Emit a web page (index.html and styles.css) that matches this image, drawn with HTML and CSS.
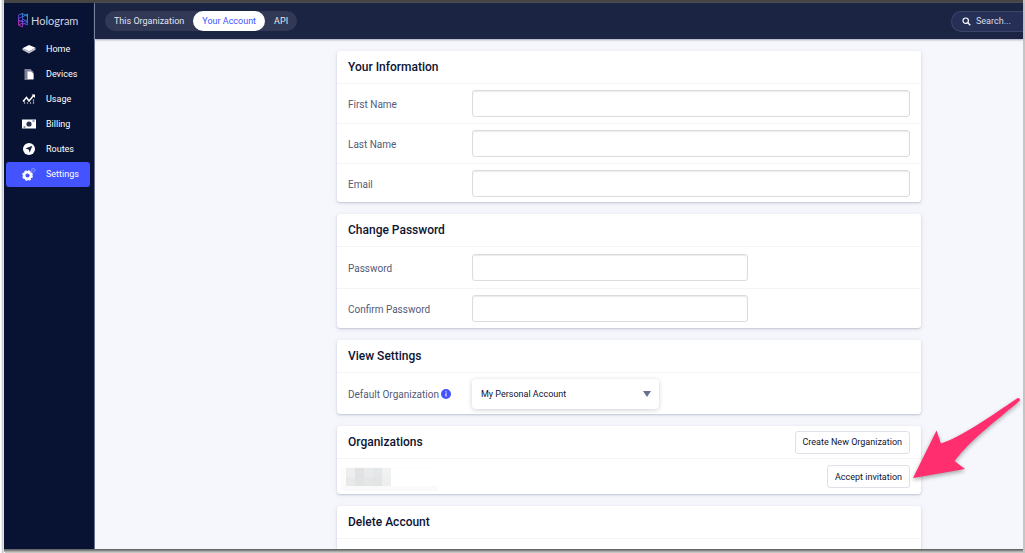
FILE: index.html
```html
<!DOCTYPE html>
<html lang="en">
<head>
<meta charset="utf-8">
<title>Hologram – Your Account</title>
<link rel="stylesheet" href="styles.css">
</head>
<body>
<div class="window">
  <aside class="sidebar">
    <a class="brand" href="#">
      <svg width="12" height="16" viewBox="0 0 12 16" aria-hidden="true">
        <defs><linearGradient id="holo" x1="0.9" y1="0" x2="0.1" y2="1"><stop offset="0" stop-color="#1fb4d8"/><stop offset="0.5" stop-color="#4b50dc"/><stop offset="1" stop-color="#e01fb0"/></linearGradient></defs>
        <path d="M1.500 3V13M5.500 1.500V15M10.500 2V13M1.500 3 5.500 1.500 10.500 4.500M5.500 5 10.500 2M1.500 6.500 5.500 4.500M1.500 8 5.500 10 10.500 7.500M5.500 7 10.500 10M1.500 13 5.500 15M5.500 12.500 10.500 10M5.500 11 10.500 13M1.500 10.500 5.500 8M1.500 13 5.500 11" fill="none" stroke="url(#holo)" stroke-width=".9"/>
      </svg>
      <span>Hologram</span>
    </a>
    <nav class="menu" aria-label="Main">
      <a class="item" href="#"><svg width="14" height="14" viewBox="0 0 14 14"><path d="M.5 6.200 7 3l6.500 2.800L7 9.500Z" fill="#fff"/><path d="M.5 6.200V8L7 11.500V9.500ZM7 9.500v2l6.500-3.700v-2Z" fill="#c3c6d2"/></svg>Home</a>
      <a class="item" href="#"><svg width="14" height="14" viewBox="0 0 14 14"><path d="M2.500 2h6l3 3v8h-9Z" fill="#7d8296"/><path d="M5.500 4.500h3.500l2.500 2.300V12h-6Z" fill="#fff"/></svg>Devices</a>
      <a class="item" href="#"><svg width="14" height="14" viewBox="0 0 14 14"><path d="M2.500 12v-3M5.500 12v-2M8.500 12v-2M11.500 12V7" stroke="#888da0" stroke-width="1.200"/><path d="M1 9.500 4.500 5.500 7 9l5-6" fill="none" stroke="#fff" stroke-width="1.500"/><path d="M9.500 2.500H13V6" fill="#fff"/></svg>Usage</a>
      <a class="item" href="#"><svg width="14" height="14" viewBox="0 0 14 14"><path d="M0 2.500h14v9H0Z" fill="#fff"/><circle cx="7" cy="7" r="2.600" fill="#2d3550"/><path d="M1.500 10h2M10.500 4h2" stroke="#2d3550"/></svg>Billing</a>
      <a class="item" href="#"><svg width="14" height="14" viewBox="0 0 14 14"><circle cx="7" cy="7" r="6" fill="#fff"/><path d="M10.300 3.700 7.800 10.500 6.600 7.600 3.500 6.500Z" fill="#18213f"/></svg>Routes</a>
      <a class="item item-active" href="#" aria-current="page"><svg width="14" height="14" viewBox="0 0 14 14"><circle cx="5.500" cy="8.500" r="3.300" fill="none" stroke="#fff" stroke-width="2.400"/><circle cx="5.500" cy="8.500" r="4.700" fill="none" stroke="#fff" stroke-width="1.400" stroke-dasharray="2.400 1.291"/><circle cx="11.300" cy="3.200" r="1.700" fill="none" stroke="#8d97ff" stroke-width="1.300" stroke-dasharray="1.200 .58"/></svg>Settings</a>
    </nav>
  </aside>

  <div class="page">
    <header class="topbar">
      <nav class="tabs" aria-label="Account scope">
        <a class="tab" href="#">This Organization</a>
        <a class="tab tab-active" href="#" aria-current="page">Your Account</a>
        <a class="tab" href="#">API</a>
      </nav>
      <label class="search">
        <svg width="9" height="9" viewBox="0 0 9 9" aria-hidden="true"><circle cx="3.700" cy="3.700" r="2.700" fill="none" stroke="#fff" stroke-width="1.200"/><path d="m5.800 5.800 2.500 2.500" stroke="#fff" stroke-width="1.300"/></svg>
        <input type="search" placeholder="Search..." aria-label="Search">
      </label>
    </header>

    <main class="content">
      <div class="cards">
        <section class="card">
          <div class="head"><h2>Your Information</h2></div>
          <div class="row"><label for="first">First Name</label><input class="field" id="first" type="text"></div>
          <div class="row"><label for="last">Last Name</label><input class="field" id="last" type="text"></div>
          <div class="row row-end"><label for="email">Email</label><input class="field" id="email" type="email"></div>
        </section>

        <section class="card">
          <div class="head"><h2>Change Password</h2></div>
          <div class="row row-tall"><label for="pass">Password</label><input class="field field-short" id="pass" type="password"></div>
          <div class="row"><label for="confirm">Confirm Password</label><input class="field field-short" id="confirm" type="password"></div>
        </section>

        <section class="card">
          <div class="head"><h2>View Settings</h2></div>
          <div class="row row-tall">
            <label for="org">Default Organization <svg class="info" width="10" height="10" viewBox="0 0 10 10" aria-hidden="true"><circle cx="5" cy="5" r="5" fill="#4353ff"/><path d="M5 4.300v3.200M5 2.300v1.100" stroke="#fff" stroke-width="1.100"/></svg></label>
            <div class="picker">
              <select id="org"><option>My Personal Account</option></select>
              <svg class="caret" width="8" height="6" viewBox="0 0 8 6" aria-hidden="true"><path d="M0 0h8L4 6Z" fill="#69708c"/></svg>
            </div>
          </div>
        </section>

        <section class="card">
          <div class="head"><h2>Organizations</h2><button class="btn" type="button">Create New Organization</button></div>
          <div class="org">
            <svg class="redacted" width="97" height="24" viewBox="0 0 97 24" aria-hidden="true">
              <path d="M0 0h97v1H5v18H0Z" fill="#fcfcfd"/><path d="M0 19h97v5H0Z" fill="#fafafb"/>
              <path d="M5 1h9v9H5Z" fill="#eeeeef"/><path d="M14 1h9v9h-9Z" fill="#e1e2e3"/><path d="M23 1h9v9h-9Z" fill="#e8eaec"/><path d="M32 1h9v9h-9Z" fill="#e4e7e8"/><path d="M41 1h9v9h-9Z" fill="#f0f1f2"/>
              <path d="M5 10h9v9H5Z" fill="#e9e9ea"/><path d="M14 10h9v9h-9Z" fill="#e2e3e3"/><path d="M23 10h9v9h-9Z" fill="#e5e6e7"/><path d="M32 10h9v9h-9Z" fill="#e3e5e5"/><path d="M41 10h9v9h-9Z" fill="#edeeee"/>
            </svg>
            <button class="btn" type="button">Accept invitation</button>
          </div>
        </section>

        <section class="card">
          <div class="head"><h2>Delete Account</h2></div>
          <div class="row"></div>
        </section>
        <svg class="pointer" width="114" height="88" viewBox="0 0 114 88" aria-hidden="true"><path d="M2 84 25.500 36.500 30 49.500C50 43 80 22 106 4.500Q109 3 109 6.500C90 23 60 45 43.500 67L54 75Z" fill="#ff2e6e"/></svg>
      </div>
    </main>
  </div>
</div>
</body>
</html>
```
FILE: styles.css
```css
* { box-sizing: border-box; }

body {
  margin: 0;
  height: 100vh;
  padding: 0 2px 4px 4px;
  overflow: hidden;
  background: linear-gradient(90deg, #fff 0 1px, #dcdee2 2px, #b9bdc6 3px, #fff 4px 5px, transparent 5px), #c4c6c4;
  font-family: Roboto, "Liberation Sans", sans-serif;
  font-size: 10px;
  color: #0e1432;
}

a { color: inherit; text-decoration: none; }
button, input, select { font: inherit; color: inherit; }

.window {
  display: flex;
  height: 100%;
  border-top: 3px solid #444544;
  background: #f6f7fc;
  box-shadow: 0 1px 0 #666866, 0 2px 0 #858785, 0 3px 0 #a9aba9;
}

.sidebar {
  flex: none;
  width: 91px;
  padding: 0 4px 0 2px;
  border-right: 1px solid #6b7090;
  background: #081232;
  color: #fff;
}
.brand {
  display: flex;
  align-items: center;
  gap: 2px;
  height: 34px;
  padding-left: 11px;
  font-family: Lato, "Liberation Sans", sans-serif;
  font-size: 11px;
  color: #cfd3e0;
}
.item {
  display: flex;
  align-items: center;
  gap: 10px;
  height: 25px;
  padding: 0 0 2px 16px;
  font-size: 9px;
  border-radius: 3px;
}
.item-active { background: #4353ff; }

.page { flex: 1; min-width: 0; display: flex; flex-direction: column; }

.topbar {
  flex: none;
  display: flex;
  align-items: center;
  justify-content: space-between;
  height: 36px;
  padding-left: 10px;
  background: #1c2444;
  box-shadow: 0 1px 2px #a5a8ba;
}
.tabs {
  display: flex;
  border-radius: 10px;
  background: #323956;
  color: #e2e4ed;
}
.tab {
  padding: 0 9px;
  border-radius: 10px;
  font-size: 9px;
  line-height: 20px;
}
.tab-active { background: #fff; color: #4353ff; }
.search {
  display: flex;
  align-items: center;
  gap: 5px;
  width: 72px;
  height: 21px;
  padding-left: 10px;
  border: 1px solid #3d4668;
  border-right: 0;
  border-radius: 11px 0 0 11px;
  background: #263056;
}
.search svg { flex: none; }
.search input {
  flex: 1;
  min-width: 0;
  padding: 0;
  border: 0;
  outline: 0;
  background: none;
  font-size: 9px;
  appearance: none;
}
.search input::placeholder { color: #d8dbe6; }

.content {
  flex: 1;
  min-height: 0;
  display: grid;
  grid-template-columns: 242fr minmax(0, 584px) 102fr;
  padding-top: 12px;
  overflow: hidden;
}
.cards {
  position: relative;
  grid-column: 2;
  display: flex;
  flex-direction: column;
  gap: 12px;
}
.card {
  border-radius: 3px;
  background: #fff;
  box-shadow: 0 1px 2px #c3c6d4, 0 1px 6px #e6e8f1;
}
.head {
  display: flex;
  align-items: center;
  justify-content: space-between;
  height: 32px;
  padding: 0 11px;
}
h2 { margin: 0; font-size: 12px; font-weight: 500; }

.row {
  display: grid;
  grid-template-columns: 124px minmax(0, 1fr);
  align-items: center;
  height: 40px;
  padding: 0 11px;
  border-top: 1px solid #f3f4f7;
}
.row-tall { height: 42px; }
.row-end { height: 39px; }
.row label { padding-top: 2px; font-size: 10px; color: #535b78; }
.info { vertical-align: -1px; }
.field {
  width: 100%;
  height: 27px;
  padding: 0 8px;
  border: 1px solid #dcdcdf;
  border-radius: 3px;
  background: #fff;
  box-shadow: inset 0 1px 1px #ececee;
}
.field-short { width: 276px; }

.picker { position: relative; width: 187px; }
.picker select {
  display: block;
  width: 100%;
  height: 30px;
  padding: 0 24px 0 9px;
  border: 0;
  border-radius: 4px;
  background: #fff;
  box-shadow: 0 1px 5px #cfd1da;
  font-size: 9px;
  appearance: none;
}
.caret { position: absolute; top: 12px; right: 8px; pointer-events: none; }

.org {
  display: flex;
  align-items: center;
  justify-content: space-between;
  height: 36px;
  padding: 0 11px 0 4px;
  border-top: 1px solid #f3f4f7;
}
.redacted { align-self: flex-end; margin-bottom: 3px; }
.btn {
  height: 23px;
  padding: 0 7px;
  border: 1px solid #dfe1e8;
  border-radius: 3px;
  background: #fff;
  font-size: 9px;
}
.pointer {
  position: absolute;
  top: 343px;
  left: 574px;
  filter: drop-shadow(0 2px 2px #0005);
}
```
